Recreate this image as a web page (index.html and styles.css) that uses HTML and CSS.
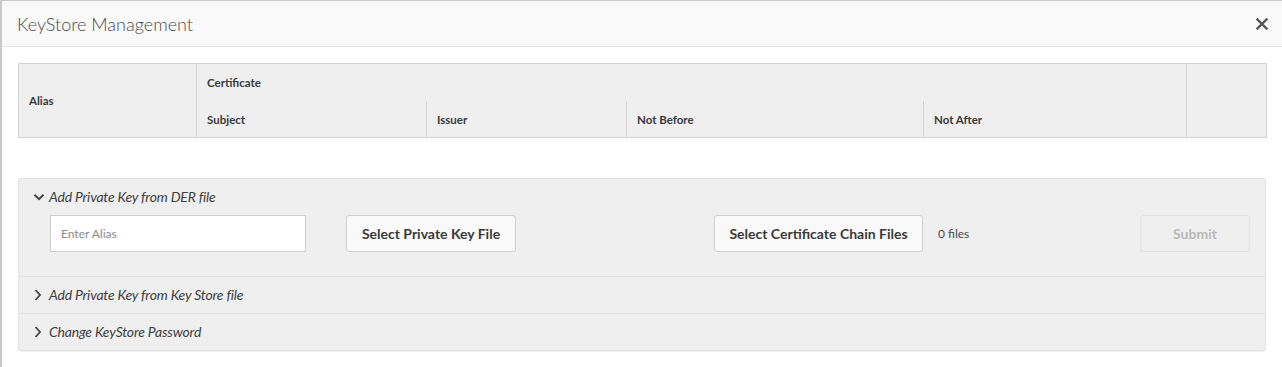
FILE: index.html
```html
<!DOCTYPE html>
<html>
<head>
<meta charset="utf-8">
<link rel="stylesheet" href="styles.css">
</head>
<body>
<div class="modal">
  <div class="modal-header">
    <h1 class="modal-title">KeyStore Management</h1>
    <button class="close" aria-label="Close">
      <svg width="12" height="12" viewBox="0 0 12 12"><path d="M1.5 1.5 L10.5 10.5 M10.5 1.5 L1.5 10.5" stroke="#555" stroke-width="2.4" stroke-linecap="square"/></svg>
    </button>
  </div>
  <div class="modal-body">
    <table class="cert-table">
      <colgroup>
        <col class="c-alias"><col class="c-subject"><col class="c-issuer"><col class="c-before"><col class="c-after"><col class="c-actions">
      </colgroup>
      <thead>
        <tr class="row-top">
          <th rowspan="2" class="th-alias">Alias</th>
          <th colspan="4" class="th-cert">Certificate</th>
          <th rowspan="2" class="th-actions"></th>
        </tr>
        <tr class="row-sub">
          <th class="th-first">Subject</th>
          <th class="th-sep">Issuer</th>
          <th class="th-sep">Not Before</th>
          <th class="th-sep">Not After</th>
        </tr>
      </thead>
    </table>

    <div class="accordion">
      <div class="acc-item open">
        <div class="acc-head">
          <svg class="chev" width="12" height="12" viewBox="0 0 12 12"><path d="M1.5 3.8 L6 8.2 L10.5 3.8" fill="none" stroke="#444" stroke-width="2"/></svg>
          <span class="acc-title">Add Private Key from DER file</span>
        </div>
        <div class="acc-content">
          <input class="alias-input" type="text" placeholder="Enter Alias">
          <button class="btn btn-key">Select Private Key File</button>
          <button class="btn btn-chain">Select Certificate Chain Files</button>
          <span class="files">0 files</span>
          <button class="btn btn-submit" disabled>Submit</button>
        </div>
      </div>
      <div class="acc-item">
        <div class="acc-head">
          <svg class="chev" width="12" height="12" viewBox="0 0 12 12"><path d="M2.5 1 L7 6 L2.5 11" fill="none" stroke="#444" stroke-width="1.8"/></svg>
          <span class="acc-title">Add Private Key from Key Store file</span>
        </div>
      </div>
      <div class="acc-item">
        <div class="acc-head">
          <svg class="chev" width="12" height="12" viewBox="0 0 12 12"><path d="M2.5 1 L7 6 L2.5 11" fill="none" stroke="#444" stroke-width="1.8"/></svg>
          <span class="acc-title">Change KeyStore Password</span>
        </div>
      </div>
    </div>
  </div>
</div>
</body>
</html>
```

FILE: styles.css
```css
* { box-sizing: border-box; }
html, body { margin: 0; padding: 0; background: #fff; }
body {
  font-family: Lato, "Open Sans", sans-serif;
  color: #4b4b4b;
}
.modal {
  width: 1282px;
  height: 367px;
  border-left: 2px solid #c9c9c9;
  border-top: 1px solid #c9c9c9;
  background: #fff;
}
.modal-header {
  height: 46px;
  background: #f9f9f9;
  border-bottom: 1px solid #e7e7e7;
  display: flex;
  align-items: center;
  justify-content: space-between;
  padding: 0 14px 0 15px;
}
.modal-title {
  margin: 0;
  font-size: 18px;
  font-weight: 300;
  color: #4b4b4b;
  padding-top: 1px;
}
.close {
  border: 0;
  background: transparent;
  padding: 0;
  width: 12px;
  height: 12px;
  display: flex;
  cursor: pointer;
}
.modal-body {
  padding: 16px 16px 0 16px;
}
.cert-table {
  width: 1248px;
  border-collapse: collapse;
  table-layout: fixed;
  background: #efefef;
  border: 1px solid #d3d3d3;
}
.c-alias { width: 178px; }
.c-subject { width: 230px; }
.c-issuer { width: 200px; }
.c-before { width: 297px; }
.c-after { width: 263px; }
.c-actions { width: 80px; }
.cert-table th {
  text-align: left;
  font-size: 11.5px;
  font-weight: 700;
  color: #3a3a3a;
  padding: 0 10px;
}
.row-top th { height: 37px; }
.row-sub th { height: 37px; padding-top: 1px; }
.th-alias { border-right: 1px solid #d3d3d3; }
.th-actions { border-left: 1px solid #d3d3d3; }
.th-cert { vertical-align: middle; }
.th-sep { border-left: 1px solid #d3d3d3; }

.accordion {
  margin-top: 40px;
  width: 1248px;
  background: #efefef;
  border: 1px solid #e2e2e2;
  border-radius: 3px;
  box-shadow: 0 1px 1px rgba(0,0,0,0.06);
}
.acc-item + .acc-item { border-top: 1px solid #e2e2e2; }
.acc-head {
  height: 36px;
  display: flex;
  align-items: center;
  padding-left: 14px;
  padding-bottom: 1px;
  gap: 4px;
}
.chev { flex: none; }
.acc-title {
  font-size: 14px;
  font-style: italic;
  color: #3e3e3e;
  letter-spacing: -0.2px;
}
.acc-content {
  display: flex;
  align-items: center;
  padding: 0 15px 24px 31px;
}
.alias-input {
  width: 256px;
  height: 37px;
  border: 1px solid #cfcfcf;
  background: #fff;
  padding: 0 10px;
  font-family: Lato, "Open Sans", sans-serif;
  font-size: 12px;
  color: #333;
  outline: none;
}
.alias-input::placeholder { color: #8a8a8a; }
.btn {
  height: 37px;
  border: 1px solid #cfcfcf;
  border-radius: 3px;
  background: #f9f9f9;
  font-family: Lato, "Open Sans", sans-serif;
  font-size: 14px;
  font-weight: 700;
  color: #3a3a3a;
  padding: 0 14px;
}
.btn-key { width: 170px; margin-left: 40px; }
.btn-chain { width: 209px; margin-left: 198px; }
.files { font-size: 12px; color: #4b4b4b; margin-left: 15px; }
.btn-submit {
  width: 110px;
  margin-left: auto;
  background: #efefef;
  border-color: #e3e3e3;
  color: #b8b8b8;
}
```
